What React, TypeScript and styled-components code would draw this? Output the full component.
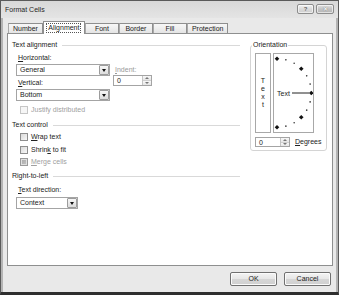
import React from "react";
import styled, { createGlobalStyle } from "styled-components";

const Global = createGlobalStyle`
  html, body { margin: 0; padding: 0; background: #ffffff; }
  body { font-family: "Liberation Sans", Arial, sans-serif; font-size: 7px; color: #222; }
  * { box-sizing: border-box; }
`;

const Window = styled.div`
  width: 339px;
  height: 295px;
  display: flex;
  flex-direction: column;
  background: #e9e9e9;
  border: 1px solid #5a5a5a;
  border-bottom: 3px solid #2e2e2e;
  box-shadow: inset 2px 0 0 #b4b4b4, inset -2px 0 0 #b4b4b4;
  overflow: hidden;
`;

const TitleBar = styled.div`
  height: 17px;
  flex: none;
  display: flex;
  align-items: flex-start;
  padding: 0 4px 0 4px;
  background: linear-gradient(#d8d8d8, #e4e4e4);
`;

const TitleText = styled.span`
  line-height: 17px;
  font-size: 7px;
  color: #262626;
`;

const CaptionButtons = styled.div`
  margin-left: auto;
  margin-top: 3px;
  display: flex;
  gap: 2px;
`;

const CaptionButton = styled.div<{ $w: number; $close?: boolean }>`
  width: ${(p) => p.$w}px;
  height: 10px;
  border: 1px solid #8c8c8c;
  border-radius: 2px;
  background: ${(p) =>
    p.$close
      ? "linear-gradient(#e2e2e2, #c4c4c4 50%, #b4b4b4)"
      : "linear-gradient(#f2f2f2, #dadada 50%, #cdcdcd)"};
  box-shadow: inset 0 0 0 1px rgba(255, 255, 255, 0.6);
  display: flex;
  align-items: center;
  justify-content: center;
  font-size: 6px;
  line-height: 8px;
  color: ${(p) => (p.$close ? "#f6f6f6" : "#666")};
  font-weight: bold;
  text-shadow: ${(p) => (p.$close ? "0 0 1px #555" : "none")};
`;

const Body = styled.div`
  flex: 1;
  display: flex;
  flex-direction: column;
  padding: 0 5px 0 6px;
`;

const TabRow = styled.div`
  height: 15px;
  flex: none;
  display: flex;
  align-items: flex-end;
  padding-left: 1px;
`;

const Tab = styled.div<{ $active?: boolean }>`
  min-width: ${(p) => (p.$active ? 42 : 34)}px;
  height: ${(p) => (p.$active ? 13 : 10)}px;
  margin-bottom: ${(p) => (p.$active ? -1 : 0)}px;
  position: relative;
  z-index: ${(p) => (p.$active ? 1 : 0)};
  padding: 0 ${(p) => (p.$active ? 2 : 4)}px;
  border: 1px solid #8e8e8e;
  border-bottom: none;
  border-left-color: ${(p) => (p.$active ? "#8e8e8e" : "#a9a9a9")};
  background: ${(p) => (p.$active ? "#ffffff" : "linear-gradient(#f7f7f7, #e4e4e4)")};
  display: flex;
  align-items: ${(p) => (p.$active ? "flex-start" : "center")};
  justify-content: center;
  padding-top: ${(p) => (p.$active ? 1 : 0)}px;
  font-size: 7px;
  line-height: 8px;
  color: #222;
  white-space: nowrap;
`;

const FocusText = styled.span`
  border: 1px dotted #555;
  padding: 0 1px;
  line-height: 8px;
`;

const Panel = styled.div`
  height: 233px;
  flex: none;
  background: #ffffff;
  border: 1px solid #8e8f8f;
  display: flex;
  padding: 6px 5px 0 4px;
`;

const LeftCol = styled.div`
  flex: 1;
  display: flex;
  flex-direction: column;
  margin-right: 7px;
`;

const Heading = styled.div<{ $mt?: number }>`
  height: 10px;
  line-height: 10px;
  margin-top: ${(p) => p.$mt ?? 0}px;
  display: flex;
  align-items: center;
  gap: 5px;
  white-space: nowrap;
  &::after {
    content: "";
    flex: 1;
    height: 1px;
    margin-right: 3px;
    background: #d9d9d9;
  }
`;

const Label = styled.div<{ $mt?: number; $indent?: number; $muted?: boolean }>`
  height: 10px;
  line-height: 10px;
  margin-top: ${(p) => p.$mt ?? 0}px;
  margin-left: ${(p) => p.$indent ?? 6}px;
  color: ${(p) => (p.$muted ? "#9a9a9a" : "#222")};
  white-space: nowrap;
`;

const FieldRow = styled.div<{ $mt?: number }>`
  display: flex;
  margin-top: ${(p) => p.$mt ?? 0}px;
  margin-left: 4px;
`;

const FieldStack = styled.div<{ $ml?: number }>`
  display: flex;
  flex-direction: column;
  margin-left: ${(p) => p.$ml ?? 0}px;
`;

const Combo = styled.div<{ $w: number; $mt?: number; $ml?: number }>`
  width: ${(p) => p.$w}px;
  height: 12px;
  margin-top: ${(p) => p.$mt ?? 0}px;
  margin-left: ${(p) => p.$ml ?? 0}px;
  border: 1px solid #a4a4a4;
  background: #fff;
  display: flex;
  align-items: center;
  padding-left: 3px;
  line-height: 10px;
`;

const DropButton = styled.div`
  margin-left: auto;
  width: 10px;
  height: 10px;
  border: 1px solid #9c9c9c;
  border-radius: 1px;
  background: linear-gradient(#f7f7f7, #dcdcdc);
  display: flex;
  align-items: center;
  justify-content: center;
  &::before {
    content: "";
    border-left: 2.5px solid transparent;
    border-right: 2.5px solid transparent;
    border-top: 3px solid #111;
  }
`;

const Spinner = styled.div<{ $w: number; $h: number }>`
  width: ${(p) => p.$w}px;
  height: ${(p) => p.$h}px;
  border: 1px solid #a4a4a4;
  background: #fff;
  display: flex;
  align-items: center;
  padding-left: 3px;
  line-height: 9px;
`;

const SpinButtons = styled.div`
  margin-left: auto;
  width: 9px;
  height: 100%;
  display: flex;
  flex-direction: column;
  border-left: 1px solid #c4c4c4;
`;

const SpinHalf = styled.div<{ $up?: boolean }>`
  flex: 1;
  display: flex;
  align-items: center;
  justify-content: center;
  background: linear-gradient(#f8f8f8, #e6e6e6);
  border-bottom: ${(p) => (p.$up ? "1px solid #d0d0d0" : "none")};
  &::before {
    content: "";
    border-left: 2px solid transparent;
    border-right: 2px solid transparent;
    ${(p) => (p.$up ? "border-bottom: 2px solid #777;" : "border-top: 2px solid #777;")}
  }
`;

const CheckRow = styled.div<{ $mt?: number; $disabled?: boolean }>`
  height: 10px;
  margin-top: ${(p) => p.$mt ?? 0}px;
  margin-left: 8px;
  display: flex;
  align-items: center;
  gap: 3px;
  line-height: 10px;
  color: ${(p) => (p.$disabled ? "#a0a0a0" : "#222")};
  white-space: nowrap;
`;

const CheckBox = styled.span<{ $state?: "off" | "disabled" | "mixed" }>`
  width: 8px;
  height: 8px;
  flex: none;
  border: 1px solid
    ${(p) => (p.$state === "disabled" ? "#c6c6c6" : p.$state === "mixed" ? "#9a9a9a" : "#8e8e8e")};
  background: ${(p) =>
    p.$state === "disabled"
      ? "#f6f6f6"
      : p.$state === "mixed"
      ? "linear-gradient(135deg, #a8a8a8, #c4c4c4)"
      : "linear-gradient(135deg, #d9d9d9, #f8f8f8)"};
  box-shadow: ${(p) => (p.$state === "mixed" ? "inset 0 0 0 1px #e0e0e0" : "none")};
`;

const RightCol = styled.div`
  width: 77px;
  flex: none;
`;

const Group = styled.fieldset`
  width: 77px;
  height: 111px;
  margin: 0;
  padding: 3px 3px 3px 4px;
  border: 1px solid #d4d4d4;
  border-radius: 3px;
  display: flex;
  flex-direction: column;
`;

const Legend = styled.legend`
  padding: 0 1px;
  margin-left: -3px;
  line-height: 10px;
  font-size: 7px;
`;

const DialRow = styled.div`
  display: flex;
  gap: 2px;
`;

const VerticalBox = styled.div`
  width: 16px;
  height: 80px;
  border: 1px solid #a8a8a8;
  display: flex;
  flex-direction: column;
  align-items: center;
  justify-content: center;
  line-height: 8px;
  font-size: 7px;
`;

const DialBox = styled.div`
  width: 41px;
  height: 80px;
  border: 1px solid #a8a8a8;
  display: flex;
`;

const DegreesRow = styled.div`
  display: flex;
  align-items: center;
  gap: 5px;
  margin-top: 4px;
  line-height: 10px;
`;

const Footer = styled.div`
  flex: 1;
  display: flex;
  justify-content: flex-end;
  align-items: flex-start;
  gap: 7px;
  padding: 6px 2px 0 0;
`;

const Button = styled.div`
  width: 47px;
  height: 14px;
  border: 1px solid #707070;
  border-radius: 2px;
  background: linear-gradient(#f4f4f4, #e6e6e6 50%, #d6d6d6 51%, #d0d0d0);
  box-shadow: inset 0 0 0 1px #fbfbfb;
  display: flex;
  align-items: center;
  justify-content: center;
  font-size: 7px;
  line-height: 10px;
  color: #222;
`;

function Dial() {
  const cx = 3;
  const cy = 39;
  const r = 34.3;
  const marks: React.ReactNode[] = [];
  for (let a = 90; a >= -90; a -= 15) {
    const rad = (a * Math.PI) / 180;
    const x = cx + r * Math.cos(rad);
    const y = cy - r * Math.sin(rad);
    if (a % 45 === 0) {
      const s = 2.3;
      marks.push(
        <polygon
          key={a}
          points={`${x},${y - s} ${x + s},${y} ${x},${y + s} ${x - s},${y}`}
          fill="#111"
        />
      );
    } else {
      marks.push(<circle key={a} cx={x} cy={y} r={0.8} fill="#333" />);
    }
  }
  return (
    <svg width="39" height="78" viewBox="0 0 39 78">
      {marks}
      <text x="3" y="41.5" fontSize="7" fontFamily="Liberation Sans, Arial, sans-serif" fill="#222">
        Text
      </text>
      <line x1="18" y1="39" x2="35" y2="39" stroke="#222" strokeWidth="1" />
    </svg>
  );
}

export default function App() {
  return (
    <>
      <Global />
      <Window>
        <TitleBar>
          <TitleText>Format Cells</TitleText>
          <CaptionButtons>
            <CaptionButton $w={17}>?</CaptionButton>
            <CaptionButton $w={18} $close>
              ✕
            </CaptionButton>
          </CaptionButtons>
        </TitleBar>
        <Body>
          <TabRow>
            <Tab>Number</Tab>
            <Tab $active>
              <FocusText>Alignment</FocusText>
            </Tab>
            <Tab>Font</Tab>
            <Tab>Border</Tab>
            <Tab>Fill</Tab>
            <Tab>Protection</Tab>
          </TabRow>
          <Panel>
            <LeftCol>
              <Heading>Text alignment</Heading>
              <Label $mt={3}>
                <u>H</u>orizontal:
              </Label>
              <FieldRow $mt={1}>
                <FieldStack>
                  <Combo $w={94}>
                    General
                    <DropButton />
                  </Combo>
                  <Label $mt={2} $indent={2}>
                    <u>V</u>ertical:
                  </Label>
                  <Combo $w={94} $mt={1}>
                    Bottom
                    <DropButton />
                  </Combo>
                </FieldStack>
                <FieldStack $ml={3}>
                  <Label $mt={1} $indent={2} $muted>
                    <u>I</u>ndent:
                  </Label>
                  <Spinner $w={39} $h={11}>
                    0
                    <SpinButtons>
                      <SpinHalf $up />
                      <SpinHalf />
                    </SpinButtons>
                  </Spinner>
                </FieldStack>
              </FieldRow>
              <CheckRow $mt={4} $disabled>
                <CheckBox $state="disabled" />
                Justify distributed
              </CheckRow>
              <Heading $mt={5}>Text control</Heading>
              <CheckRow $mt={2}>
                <CheckBox />
                <span>
                  <u>W</u>rap text
                </span>
              </CheckRow>
              <CheckRow $mt={3}>
                <CheckBox />
                <span>
                  Shrin<u>k</u> to fit
                </span>
              </CheckRow>
              <CheckRow $mt={2} $disabled>
                <CheckBox $state="mixed" />
                <span>
                  <u>M</u>erge cells
                </span>
              </CheckRow>
              <Heading $mt={4}>Right-to-left</Heading>
              <Label $mt={4}>
                <u>T</u>ext direction:
              </Label>
              <Combo $w={62} $mt={2} $ml={4}>
                Context
                <DropButton />
              </Combo>
            </LeftCol>
            <RightCol>
              <Group>
                <Legend>Orientation</Legend>
                <DialRow>
                  <VerticalBox>
                    <span>T</span>
                    <span>e</span>
                    <span>x</span>
                    <span>t</span>
                  </VerticalBox>
                  <DialBox>
                    <Dial />
                  </DialBox>
                </DialRow>
                <DegreesRow>
                  <Spinner $w={35} $h={10}>
                    0
                    <SpinButtons>
                      <SpinHalf $up />
                      <SpinHalf />
                    </SpinButtons>
                  </Spinner>
                  <span>
                    <u>D</u>egrees
                  </span>
                </DegreesRow>
              </Group>
            </RightCol>
          </Panel>
          <Footer>
            <Button>OK</Button>
            <Button>Cancel</Button>
          </Footer>
        </Body>
      </Window>
    </>
  );
}
